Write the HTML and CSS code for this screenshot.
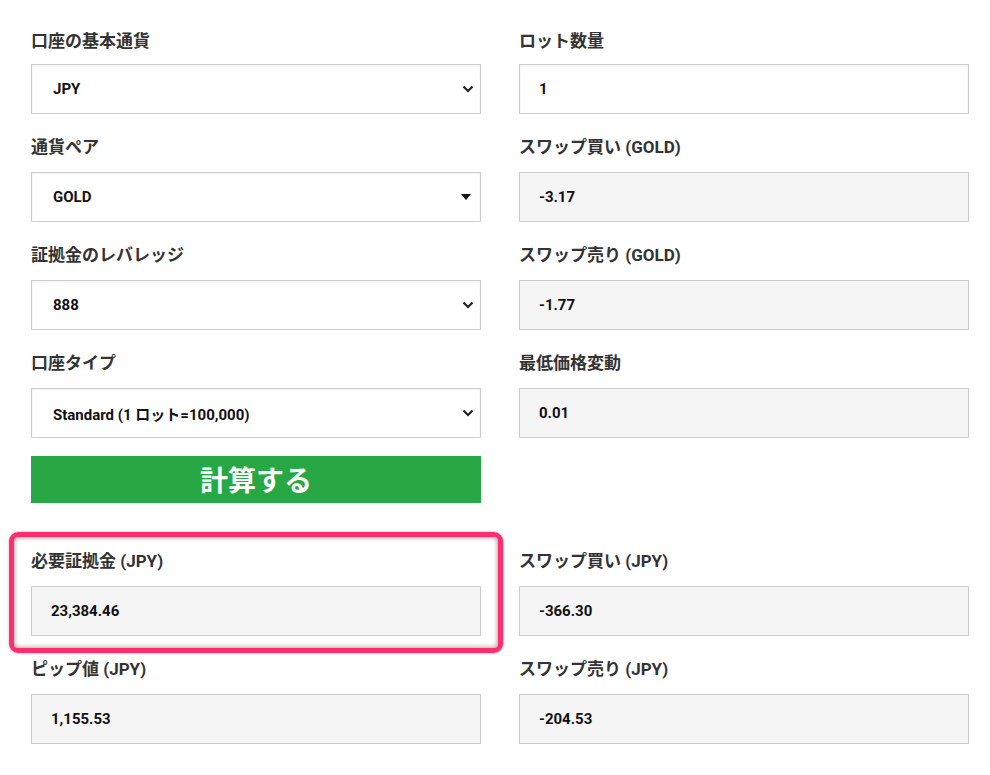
FILE: index.html
```html
<!DOCTYPE html>
<html lang="ja">
<head>
<meta charset="utf-8">
<link rel="stylesheet" href="styles.css">
</head>
<body>
<div class="page">
  <div class="grid">
    <div class="group first">
      <div class="label">口座の基本通貨</div>
      <div class="field select"><span>JPY</span>
        <svg class="chev" width="12" height="8" viewBox="0 0 12 8"><path d="M1.5 1.5 L6 6 L10.5 1.5" fill="none" stroke="#222" stroke-width="2.2"/></svg>
      </div>
    </div>
    <div class="group first">
      <div class="label">ロット数量</div>
      <div class="field input"><span>1</span></div>
    </div>

    <div class="group">
      <div class="label">通貨ペア</div>
      <div class="field select"><span>GOLD</span>
        <svg class="tri" width="10" height="6" viewBox="0 0 10 6"><path d="M0 0 H10 L5 6 Z" fill="#111"/></svg>
      </div>
    </div>
    <div class="group">
      <div class="label">スワップ買い (GOLD)</div>
      <div class="field ro"><span>-3.17</span></div>
    </div>

    <div class="group">
      <div class="label">証拠金のレバレッジ</div>
      <div class="field select"><span>888</span>
        <svg class="chev" width="12" height="8" viewBox="0 0 12 8"><path d="M1.5 1.5 L6 6 L10.5 1.5" fill="none" stroke="#222" stroke-width="2.2"/></svg>
      </div>
    </div>
    <div class="group">
      <div class="label">スワップ売り (GOLD)</div>
      <div class="field ro"><span>-1.77</span></div>
    </div>

    <div class="group">
      <div class="label">口座タイプ</div>
      <div class="field select"><span>Standard (1 ロット=100,000)</span>
        <svg class="chev" width="12" height="8" viewBox="0 0 12 8"><path d="M1.5 1.5 L6 6 L10.5 1.5" fill="none" stroke="#222" stroke-width="2.2"/></svg>
      </div>
    </div>
    <div class="group">
      <div class="label">最低価格変動</div>
      <div class="field ro"><span>0.01</span></div>
    </div>

    <div class="btn-cell"><button class="calc">計算する</button></div>
    <div class="btn-cell"></div>

    <div class="group result highlight-wrap">
      <div class="label">必要証拠金 (JPY)</div>
      <div class="field ro"><span>23,384.46</span></div>
      <div class="highlight"></div>
    </div>
    <div class="group result">
      <div class="label">スワップ買い (JPY)</div>
      <div class="field ro"><span>-366.30</span></div>
    </div>

    <div class="group">
      <div class="label">ピップ値 (JPY)</div>
      <div class="field ro"><span>1,155.53</span></div>
    </div>
    <div class="group">
      <div class="label">スワップ売り (JPY)</div>
      <div class="field ro"><span>-204.53</span></div>
    </div>
  </div>
</div>
</body>
</html>
```
FILE: styles.css
```css
* { box-sizing: border-box; }
html, body { margin: 0; padding: 0; background: #fff; }
body {
  font-family: Roboto, "Noto Sans CJK JP", "Liberation Sans", sans-serif;
  color: #333;
}
.page { padding: 25px 21px 0 31px; }
.grid {
  display: grid;
  grid-template-columns: 450px 450px;
  column-gap: 38px;
}
.group { padding-bottom: 19px; position: relative; }
.label {
  height: 28px;
  line-height: 28px;
  font-size: 17px;
  font-weight: 700;
  color: #333;
  margin-bottom: 11px;
  white-space: nowrap;
}
.first .label { margin-top: 2px; margin-bottom: 9px; }
.field {
  height: 50px;
  border: 1px solid #ccc;
  display: flex;
  align-items: center;
  justify-content: space-between;
  padding: 0 6px 0 21px;
  font-size: 15px;
  font-weight: 700;
  color: #111;
}
.field.input, .field.select {
  background: #fff;
  box-shadow: inset 0 1px 2px rgba(0,0,0,0.06);
}
.field.ro { background: #f5f5f5; padding-left: 19px; }
.field.input { padding-left: 19px; }
.chev { display: block; margin-right: 0; }
.tri { display: block; margin-right: 3px; }
.calc {
  display: block;
  width: 450px;
  height: 47px;
  margin: -1px 0 0;
  border: 0;
  background: #28a745;
  color: #fff;
  font-family: "Noto Sans CJK JP", Roboto, sans-serif;
  font-size: 28px;
  font-weight: 700;
  line-height: 47px;
  padding: 0;
}
.result { margin-top: 44px; }
.highlight {
  position: absolute;
  left: -22px;
  top: -15px;
  width: 494px;
  height: 121px;
  border: 5px solid #ff2d6b;
  border-radius: 9px;
  box-shadow: inset 0 0 4px 1px rgba(0,0,0,0.35), 0 0 3px rgba(0,0,0,0.25);
  pointer-events: none;
}
```
